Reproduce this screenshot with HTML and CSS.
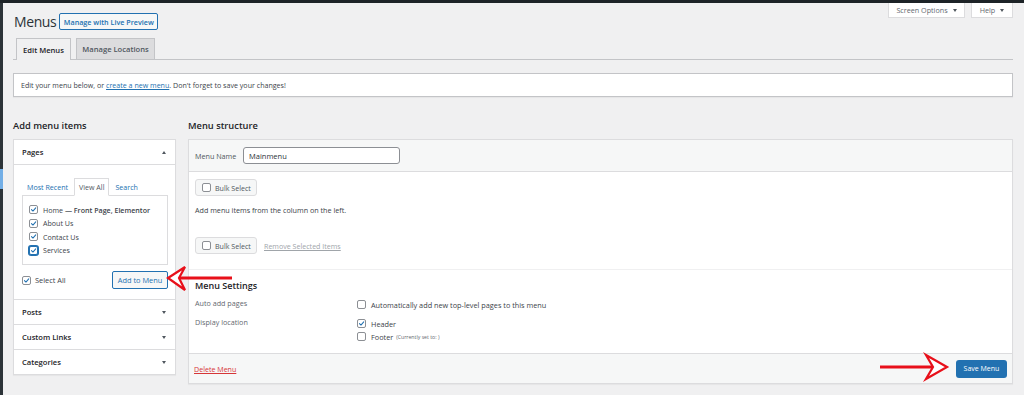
FILE: index.html
```html
<!DOCTYPE html>
<html lang="en">
<head>
<meta charset="utf-8">
<title>Menus</title>
<link rel="stylesheet" href="styles.css">
</head>
<body>
<div class="topbar"></div>
<div class="frame">
  <div class="sidestrip"><span class="side-active"></span></div>
  <div class="wrap">
    <div class="head-row">
      <div class="title-group">
        <h1 class="page-title">Menus</h1>
        <span class="btn-outline btn-preview">Manage with Live Preview</span>
      </div>
      <div class="meta-links">
        <span class="meta-btn meta-screen">Screen Options <i class="tri-down"></i></span>
        <span class="meta-btn meta-help">Help <i class="tri-down"></i></span>
      </div>
    </div>

    <div class="tabs">
      <span class="tab tab-active tab-edit">Edit Menus</span>
      <span class="tab tab-loc">Manage Locations</span>
    </div>

    <div class="notice">Edit your menu below, or <span class="link">create a new menu</span>. Don't forget to save your changes!</div>

    <div class="columns">
      <div class="col-left">
        <h2 class="col-title">Add menu items</h2>
        <div class="acc">
          <div class="acc-title acc-open">Pages <i class="tri-up"></i></div>
          <div class="acc-content">
            <div class="mini-tabs">
              <span class="mini-tab">Most Recent</span>
              <span class="mini-tab mini-active">View All</span>
              <span class="mini-tab">Search</span>
            </div>
            <div class="checklist">
              <div class="check-row"><span class="cb cb-on"><svg viewBox="0 0 10 10"><path d="M2.1 5.1 L4.2 7.2 L8.2 2.7"/></svg></span><span>Home <b class="post-state">— Front Page, Elementor</b></span></div>
              <div class="check-row"><span class="cb cb-on"><svg viewBox="0 0 10 10"><path d="M2.1 5.1 L4.2 7.2 L8.2 2.7"/></svg></span><span>About Us</span></div>
              <div class="check-row"><span class="cb cb-on"><svg viewBox="0 0 10 10"><path d="M2.1 5.1 L4.2 7.2 L8.2 2.7"/></svg></span><span>Contact Us</span></div>
              <div class="check-row"><span class="cb cb-on cb-focus"><svg viewBox="0 0 10 10"><path d="M2.1 5.1 L4.2 7.2 L8.2 2.7"/></svg></span><span>Services</span></div>
            </div>
            <div class="acc-actions">
              <label class="select-all"><span class="cb cb-on"><svg viewBox="0 0 10 10"><path d="M2.1 5.1 L4.2 7.2 L8.2 2.7"/></svg></span>Select All</label>
              <span class="btn-outline btn-add">Add to Menu</span>
            </div>
          </div>
          <div class="acc-title">Posts <i class="tri-down"></i></div>
          <div class="acc-title">Custom Links <i class="tri-down"></i></div>
          <div class="acc-title acc-last">Categories <i class="tri-down"></i></div>
        </div>
      </div>

      <div class="col-right">
        <h2 class="col-title">Menu structure</h2>
        <div class="menu-edit">
          <div class="menu-header">
            <span class="menu-name-label">Menu Name</span>
            <span class="menu-name-input">Mainmenu</span>
          </div>
          <div class="menu-body">
            <span class="bulk"><span class="cb"></span>Bulk Select</span>
            <p class="hint">Add menu items from the column on the left.</p>
            <div class="bulk-row">
              <span class="bulk"><span class="cb"></span>Bulk Select</span>
              <span class="remove-link">Remove Selected Items</span>
            </div>
          </div>
          <div class="menu-settings">
            <h3 class="settings-title">Menu Settings</h3>
            <div class="settings-grid">
              <div class="set-label">Auto add pages</div>
              <div class="set-opts">
                <div class="opt"><span class="cb"></span>Automatically add new top-level pages to this menu</div>
              </div>
              <div class="set-label">Display location</div>
              <div class="set-opts">
                <div class="opt"><span class="cb cb-on"><svg viewBox="0 0 10 10"><path d="M2.1 5.1 L4.2 7.2 L8.2 2.7"/></svg></span>Header</div>
                <div class="opt"><span class="cb"></span>Footer <small class="opt-note">(Currently set to: )</small></div>
              </div>
            </div>
          </div>
          <div class="menu-footer">
            <span class="delete-link">Delete Menu</span>
            <span class="btn-primary">Save Menu</span>
          </div>
        </div>
      </div>
    </div>
  </div>
</div>

<svg class="arrows" viewBox="0 0 1024 395" width="1024" height="395">
  <path class="arrow-line" d="M178 278 L232 278"/>
  <path class="arrow-head" d="M168 278 L185 267 L179 278 L185 290 Z"/>
  <path class="arrow-line" d="M880 367 L934 367"/>
  <path class="arrow-head" d="M947 367 L926 355 L933 367 L926 379 Z"/>
</svg>
</body>
</html>
```

FILE: styles.css
```css
* { box-sizing: border-box; }

html, body {
  margin: 0;
  padding: 0;
}

body {
  background: #f0f0f1;
  font-family: "Open Sans", "Noto Sans", "DejaVu Sans", sans-serif;
  font-size: 7.2px;
  color: #3c434a;
  width: 1024px;
  height: 395px;
  overflow: hidden;
  position: relative;
}

.topbar {
  height: 3px;
  background: #1d2327;
}

.frame {
  display: flex;
  height: 392px;
}

.sidestrip {
  width: 3px;
  flex: none;
  background: #2c3338;
  display: flex;
  flex-direction: column;
}

.side-active {
  display: block;
  margin-top: 166px;
  height: 20px;
  background: #72aee6;
}

.wrap {
  flex: 1;
  padding: 0 11px 0 10px;
}

/* header */
.head-row {
  display: flex;
  justify-content: space-between;
  align-items: flex-start;
}

.title-group {
  display: flex;
  align-items: center;
  gap: 3px;
  margin-top: 10px;
  height: 17px;
  padding-left: 1px;
}

.page-title {
  margin: 0;
  font-size: 14px;
  letter-spacing: -0.4px;
  font-weight: 400;
  line-height: 17px;
  color: #2c3338;
}

.btn-outline {
  display: inline-flex;
  align-items: center;
  justify-content: center;
  border: 1px solid #2271b1;
  color: #2271b1;
  background: #f6f7f7;
  border-radius: 2px;
  font-size: 7.2px;
  font-weight: 600;
  white-space: nowrap;
}

.btn-preview {
  width: 99px;
  height: 17px;
}

.meta-links {
  display: flex;
  gap: 6px;
}

.meta-btn {
  display: inline-flex;
  align-items: center;
  justify-content: center;
  gap: 5px;
  height: 15px;
  background: #fff;
  border: 1px solid #dcdcde;
  border-top: none;
  color: #646970;
  font-size: 7.2px;
}

.meta-screen { width: 77px; }
.meta-help { width: 42px; }

.tri-down {
  display: inline-block;
  width: 0;
  height: 0;
  border-left: 2.5px solid transparent;
  border-right: 2.5px solid transparent;
  border-top: 3.5px solid #50575e;
}

.tri-up {
  display: inline-block;
  width: 0;
  height: 0;
  border-left: 2.5px solid transparent;
  border-right: 2.5px solid transparent;
  border-bottom: 3.5px solid #50575e;
}

/* tabs */
.tabs {
  display: flex;
  gap: 5px;
  margin-top: 8px;
  padding-left: 3px;
  border-bottom: 1px solid #c3c4c7;
  height: 22px;
}

.tab {
  display: inline-flex;
  align-items: center;
  justify-content: center;
  height: 22px;
  border: 1px solid #c3c4c7;
  border-bottom: none;
  background: #dcdcde;
  color: #50575e;
  font-size: 7.6px;
  font-weight: 600;
}

.tab-active {
  background: #f0f0f1;
  color: #1d2327;
  height: 22px;
  margin-bottom: -1px;
}

.tab-edit { width: 55px; }
.tab-loc { width: 79px; height: 21px; }

/* notice */
.notice {
  margin-top: 13px;
  height: 24px;
  background: #fff;
  border: 1px solid #c3c4c7;
  box-shadow: 0 1px 1px rgba(0, 0, 0, 0.04);
  padding-left: 7px;
  display: flex;
  align-items: center;
  font-size: 7.1px;
  white-space: pre;
}

.link {
  color: #2271b1;
  text-decoration: underline;
}

/* columns */
.columns {
  display: flex;
  gap: 12px;
  margin-top: 21px;
  align-items: flex-start;
}

.col-left {
  width: 163px;
  flex: none;
}

.col-right {
  flex: 1;
}

.col-title {
  margin: 0 0 5px;
  font-size: 9.3px;
  font-weight: 600;
  line-height: 16px;
  color: #1d2327;
}

/* accordion */
.acc {
  background: #fff;
  border: 1px solid #dcdcde;
  box-shadow: 0 1px 1px rgba(0, 0, 0, 0.04);
}

.acc-title {
  height: 25px;
  display: flex;
  align-items: center;
  justify-content: space-between;
  padding: 0 9px 0 8px;
  border-bottom: 1px solid #dcdcde;
  font-size: 7.6px;
  font-weight: 600;
  color: #1d2327;
}

.acc-last {
  border-bottom: none;
  height: 24px;
}

.acc-content {
  padding: 13px 7px 10px 8px;
  border-bottom: 1px solid #dcdcde;
}

.mini-tabs {
  display: flex;
  align-items: flex-end;
  gap: 6px;
  padding-left: 5px;
  height: 17px;
}

.mini-tab {
  color: #2271b1;
  font-size: 7.1px;
  line-height: 16px;
}

.mini-active {
  color: #50575e;
  background: #fff;
  border: 1px solid #dcdcde;
  border-bottom: 1px solid #fff;
  padding: 0 4px;
  height: 18px;
  margin-bottom: -1px;
  position: relative;
  z-index: 1;
}

.checklist {
  border: 1px solid #dcdcde;
  height: 70px;
  padding: 7px 0 0 6px;
}

.check-row {
  display: flex;
  align-items: center;
  gap: 5px;
  height: 13.5px;
  font-size: 7.1px;
  color: #3c434a;
  white-space: nowrap;
}

.post-state {
  font-weight: 600;
}

.cb {
  display: inline-flex;
  width: 9px;
  height: 9px;
  flex: none;
  border: 1px solid #8c8f94;
  border-radius: 2px;
  background: #fff;
  align-items: center;
  justify-content: center;
}

.cb svg {
  width: 9px;
  height: 9px;
}

.cb path {
  fill: none;
  stroke: #2271b1;
  stroke-width: 1.5;
  stroke-linecap: round;
  stroke-linejoin: round;
}

.cb-focus {
  border-color: #2271b1;
  box-shadow: 0 0 0 1px #2271b1;
}

.acc-actions {
  margin-top: 6px;
  display: flex;
  justify-content: space-between;
  align-items: center;
  height: 18px;
}

.select-all {
  display: flex;
  align-items: center;
  gap: 4px;
  font-size: 7.4px;
}

.btn-add {
  width: 56px;
  height: 18px;
  font-weight: 400;
  font-size: 7.4px;
}

/* menu edit */
.menu-edit {
  background: #fff;
  border: 1px solid #dcdcde;
  box-shadow: 0 1px 1px rgba(0, 0, 0, 0.04);
}

.menu-header {
  height: 32px;
  background: #f6f7f7;
  border-bottom: 1px solid #dcdcde;
  display: flex;
  align-items: center;
  padding-left: 6px;
}

.menu-name-label {
  width: 48px;
  color: #50575e;
  font-size: 7.2px;
}

.menu-name-input {
  width: 157px;
  height: 17px;
  border: 1px solid #8c8f94;
  border-radius: 3px;
  background: #fff;
  padding-left: 5px;
  display: flex;
  align-items: center;
  font-size: 7.5px;
  color: #2c3338;
}

.menu-body {
  padding: 7px 6px 15px;
}

.bulk {
  display: inline-flex;
  align-items: center;
  gap: 4px;
  width: 62px;
  height: 17px;
  padding-left: 6px;
  background: #f6f7f7;
  border: 1px solid #dcdcde;
  border-radius: 3px;
  color: #50575e;
  font-size: 7.1px;
  white-space: nowrap;
}

.hint {
  margin: 9px 0 0;
  line-height: 10px;
  font-size: 7.2px;
}

.bulk-row {
  margin-top: 22px;
  display: flex;
  align-items: center;
  gap: 7px;
}

.remove-link {
  color: #a0a5aa;
  text-decoration: underline;
  font-size: 7.1px;
}

.menu-settings {
  border-top: 1px solid #f0f0f1;
  padding: 9px 6px 10px;
}

.settings-title {
  margin: 0;
  font-size: 9px;
  font-weight: 600;
  line-height: 14px;
  color: #1d2327;
}

.settings-grid {
  margin-top: 5px;
  display: grid;
  grid-template-columns: 162px 1fr;
  row-gap: 6px;
}

.set-label {
  color: #646970;
  font-size: 7.2px;
  line-height: 11px;
}

.opt {
  display: flex;
  align-items: center;
  gap: 5px;
  height: 13px;
  font-size: 7.3px;
  color: #3c434a;
}

.opt-note {
  font-size: 5.2px;
  color: #646970;
  margin-left: -2px;
}

.menu-footer {
  height: 30px;
  background: #f6f7f7;
  border-top: 1px solid #dcdcde;
  display: flex;
  justify-content: space-between;
  align-items: center;
  padding: 0 5px 0 5px;
}

.delete-link {
  color: #d63638;
  text-decoration: underline;
  font-size: 7.1px;
}

.btn-primary {
  display: inline-flex;
  align-items: center;
  justify-content: center;
  width: 51px;
  height: 18px;
  background: #2271b1;
  border-radius: 3px;
  color: #fff;
  font-size: 7px;
}

/* annotation arrows */
.arrows {
  position: absolute;
  left: 0;
  top: 0;
  pointer-events: none;
}

.arrow-line {
  stroke: #e8101a;
  stroke-width: 3;
  fill: none;
}

.arrow-head {
  fill: #fff;
  stroke: #e8101a;
  stroke-width: 2.2;
  stroke-linejoin: miter;
}
```
